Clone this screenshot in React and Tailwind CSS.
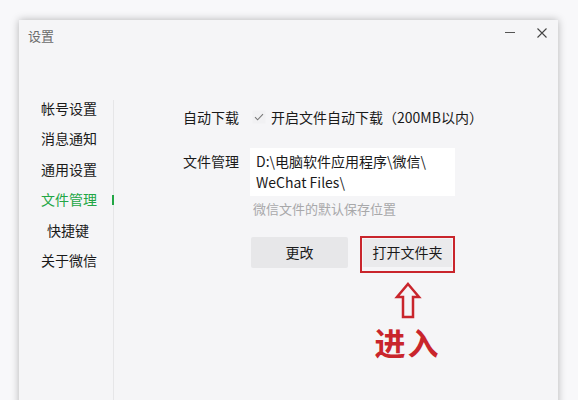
import React from "react";

const menu = ["帐号设置", "消息通知", "通用设置", "文件管理", "快捷键", "关于微信"];

const App = () => {
  return (
    <div
      className="w-[578px] h-[400px] overflow-hidden bg-[#f8f8fa] pl-[19px] pt-[20px] pr-[20px]"
      style={{ fontFamily: '"Noto Sans CJK SC", "Noto Sans", sans-serif' }}
    >
      <div className="h-[400px] bg-[#f5f5f7] shadow-[0_0_8px_rgba(0,0,0,0.28)] flex flex-col">
        {/* title bar */}
        <div className="h-[34px] flex items-start justify-between pl-[9px] pr-[10px]">
          <span className="text-[13px] text-[#6b6b6b] leading-[19px] pt-[6px]">设置</span>
          <div className="flex items-center gap-[20px] pt-[7px]">
            <svg width="12" height="12" viewBox="0 0 12 12">
              <path d="M1 5.5h10" stroke="#555" strokeWidth="1" />
            </svg>
            <svg width="12" height="12" viewBox="0 0 12 12">
              <path d="M1.5 1.5l9 9M10.5 1.5l-9 9" stroke="#444" strokeWidth="1.1" />
            </svg>
          </div>
        </div>

        <div className="flex flex-1">
          {/* sidebar */}
          <div className="w-[95px] mt-[46px] border-r border-[#e6e6e8] relative">
            <div className="flex flex-col -mt-[7px]">
              {menu.map((m, i) => (
                <div key={i} className="h-[30.5px] flex items-center">
                  <span
                    className={
                      "text-[14px] " +
                      (i === 3
                        ? "text-[#22a645] pl-[22px]"
                        : i === 4
                        ? "text-[#1a1a1a] pl-[28px]"
                        : "text-[#1a1a1a] pl-[22px]")
                    }
                  >
                    {m}
                  </span>
                  {i === 3 && (
                    <div className="absolute right-[-1px] w-[2px] h-[10px] bg-[#22a645]" />
                  )}
                </div>
              ))}
            </div>
          </div>

          {/* content */}
          <div className="flex-1 pl-[69px] pt-[51px] text-[14px] text-[#1a1a1a]">
            <div className="flex items-center h-[24px]">
              <span className="w-[67px]">自动下载</span>
              <svg width="14" height="14" viewBox="0 0 14 14" className="ml-[2px]">
                <rect x="0.5" y="0.5" width="13" height="13" fill="#f1f1f3" />
                <path d="M3 7.2l2.6 2.6L11 4.2" fill="none" stroke="#777" strokeWidth="1.1" />
              </svg>
              <span className="ml-[5px]">开启文件自动下载（200MB以内）</span>
            </div>

            <div className="flex mt-[19px]">
              <span className="w-[67px] pt-[3px] leading-[21px]">文件管理</span>
              <div className="flex flex-col">
                <div className="w-[205px] h-[48px] bg-white px-[6px] pt-[3px] leading-[21px]">
                  <div>D:\电脑软件应用程序\微信\</div>
                  <div>WeChat Files\</div>
                </div>
                <div className="text-[13px] text-[#a8a8aa] mt-[3px] pl-[3px]">
                  微信文件的默认保存位置
                </div>
              </div>
            </div>

            <div className="flex items-start mt-[17px] ml-[68px]">
              <div className="w-[97px] h-[31px] bg-[#e7e7e9] rounded-[2px] flex items-center justify-center mt-[1px]">
                更改
              </div>
              <div className="ml-[12px] flex flex-col items-center">
                <div className="border-2 border-[#c9252c] p-[1px] pb-[4px]">
                  <div className="w-[89px] h-[28px] bg-[#eaeaec] flex items-center justify-center">
                    打开文件夹
                  </div>
                </div>
                <svg width="28" height="38" viewBox="0 0 28 38" className="mt-[9px]">
                  <path
                    d="M14 2L25 15H19V35H9V15H3Z"
                    fill="none"
                    stroke="#c9252c"
                    strokeWidth="2.5"
                    strokeLinejoin="miter"
                  />
                </svg>
                <div className="text-[31px] font-bold text-[#c9252c] leading-[36px] mt-[4px] tracking-[2px]">
                  进入
                </div>
              </div>
            </div>
          </div>
        </div>
      </div>
    </div>
  );
};

export default App;
